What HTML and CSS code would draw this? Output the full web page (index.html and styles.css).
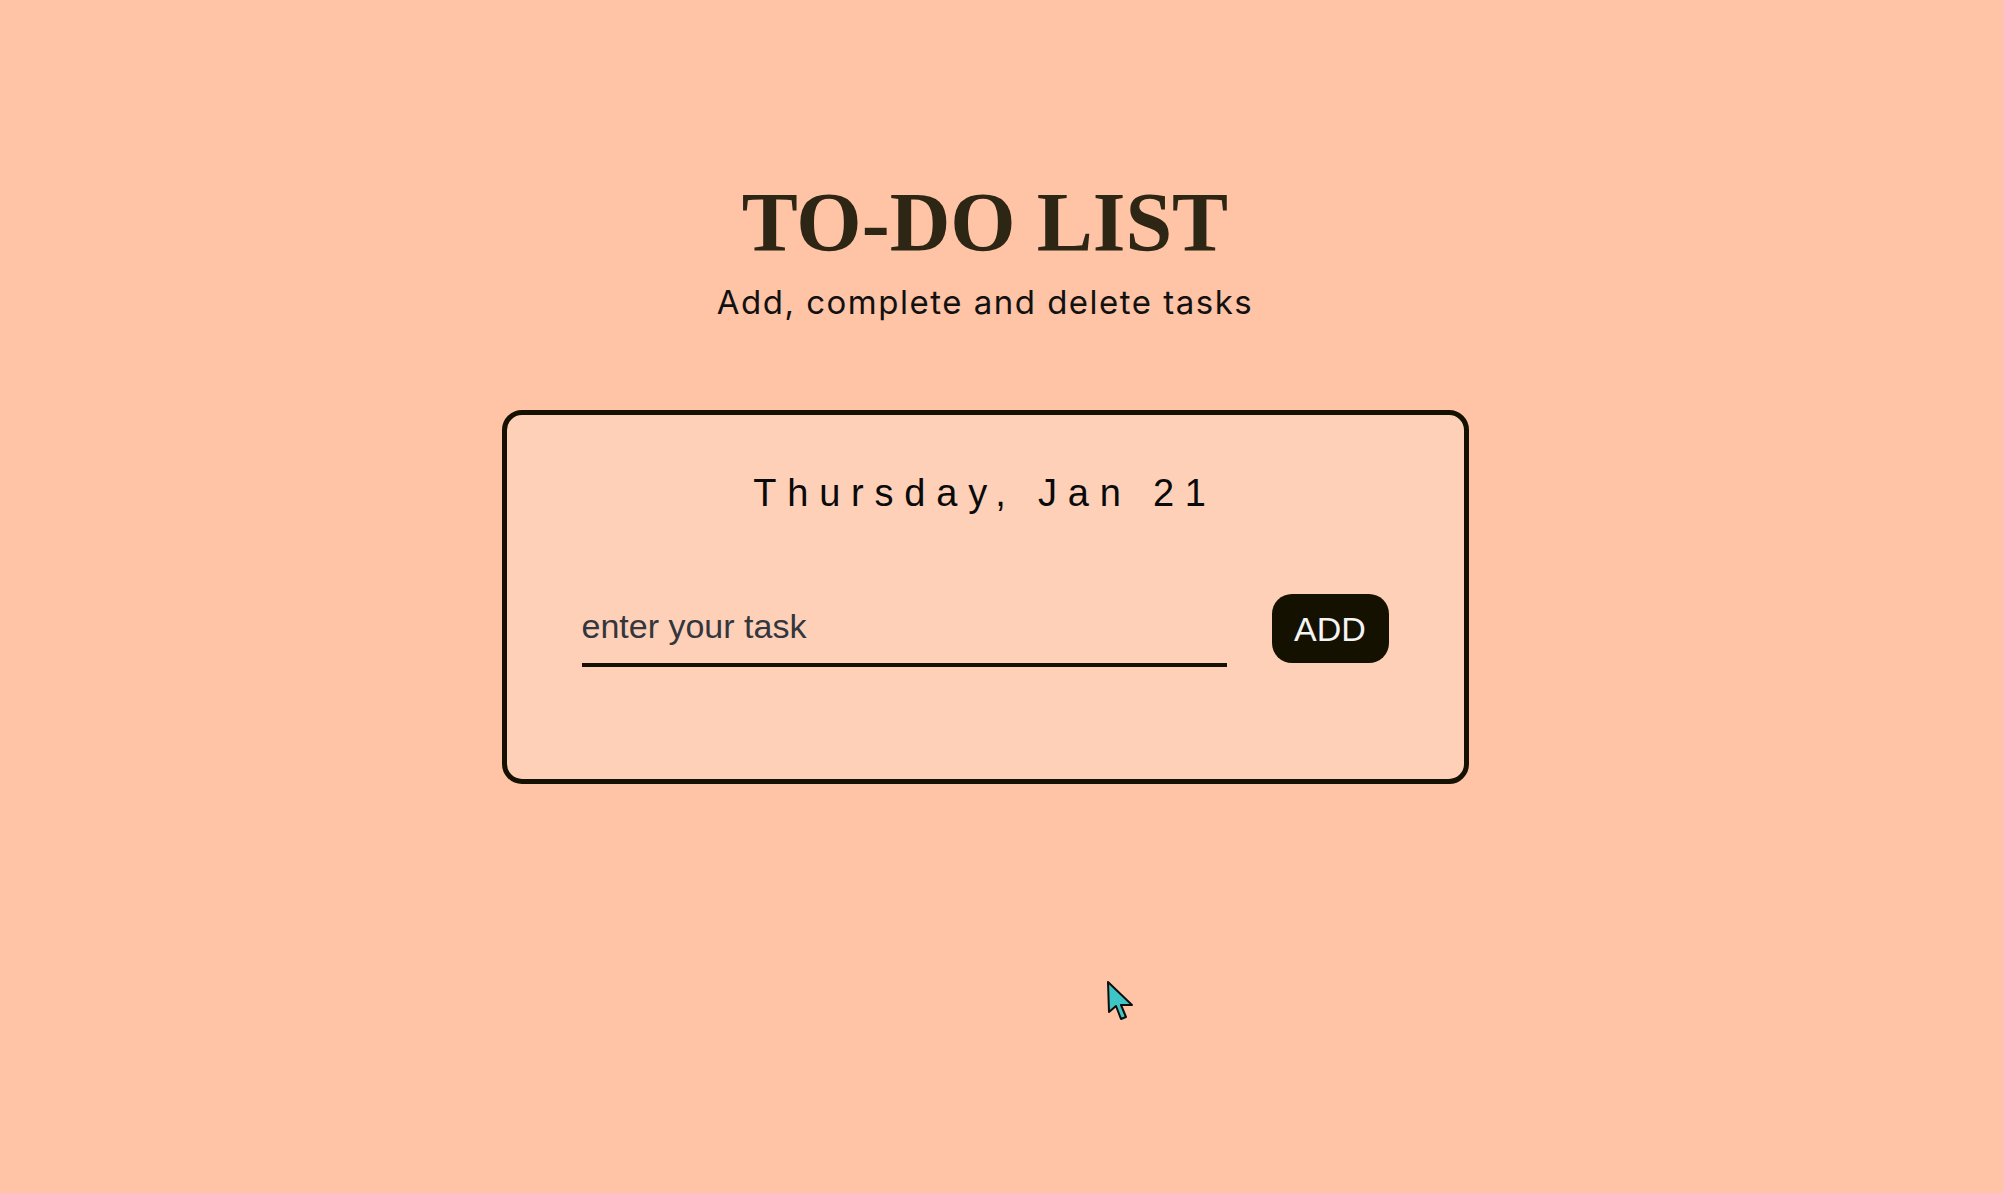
FILE: index.html
```html
<!DOCTYPE html>
<html lang="en">
<head>
<meta charset="utf-8">
<title>To-Do List</title>
<link rel="stylesheet" href="styles.css">
</head>
<body>
<main class="page">
  <h1 class="title">TO-DO LIST</h1>
  <p class="subtitle">Add, complete and delete tasks</p>
  <section class="card">
    <div class="date">Thursday, Jan 21</div>
    <form class="row" onsubmit="return false;">
      <input class="task-input" type="text" placeholder="enter your task">
      <button class="add-btn" type="submit">ADD</button>
    </form>
  </section>
</main>
<svg class="cursor" width="28" height="42" viewBox="-2 -2 28 42" aria-hidden="true">
  <path d="M0 0 L1 30 L8 24 L13 37 L18 35 L13 23 L24 23 Z" fill="#3ec6c6" stroke="#0e0e0e" stroke-width="2" stroke-linejoin="round"/>
</svg>
</body>
</html>
```

FILE: styles.css
```css
html, body {
  margin: 0;
  padding: 0;
  background: #ffc3a6;
  height: 100%;
}

body {
  overflow: hidden;
}

.page {
  display: flex;
  flex-direction: column;
  align-items: center;
  padding-top: 181px;
  margin-right: 33px;
}

.title {
  margin: 0;
  font-family: "Liberation Serif", "Times New Roman", serif;
  font-weight: 700;
  font-size: 84px;
  line-height: 1;
  color: #2d2614;
}

.subtitle {
  margin: 21px 0 0;
  font-family: Inter, "Noto Sans", sans-serif;
  font-size: 33px;
  line-height: 1;
  letter-spacing: 1.5px;
  color: #111111;
}

.card {
  margin-top: 91px;
  width: 957px;
  box-sizing: content-box;
  border: 5px solid #151100;
  border-radius: 20px;
  background: #ffd0b8;
  padding: 59px 0 112px;
  display: flex;
  flex-direction: column;
  align-items: center;
}

.date {
  font-family: "Liberation Sans", Arial, sans-serif;
  font-size: 38px;
  line-height: 1;
  letter-spacing: 10.8px;
  color: #0a0a0a;
}

.row {
  margin: 82px 0 0;
  width: 807px;
  display: flex;
  align-items: flex-start;
  gap: 45px;
}

.task-input {
  flex: 1;
  min-width: 0;
  box-sizing: border-box;
  height: 73px;
  margin: 0;
  padding: 15px 0 20px;
  border: none;
  border-bottom: 4px solid #151100;
  background: transparent;
  outline: none;
  font-family: "Liberation Sans", Arial, sans-serif;
  font-size: 34px;
  line-height: 34px;
  color: #2d3037;
}

.task-input::placeholder {
  color: #33363c;
  opacity: 1;
}

.add-btn {
  width: 117px;
  height: 69px;
  margin: 0;
  padding: 0;
  border: none;
  border-radius: 20px;
  background: #151100;
  color: #f4f4f4;
  font-family: "Liberation Sans", Arial, sans-serif;
  font-size: 34px;
  line-height: 1;
  cursor: pointer;
}

.cursor {
  position: absolute;
  left: 1106px;
  top: 980px;
}
```
